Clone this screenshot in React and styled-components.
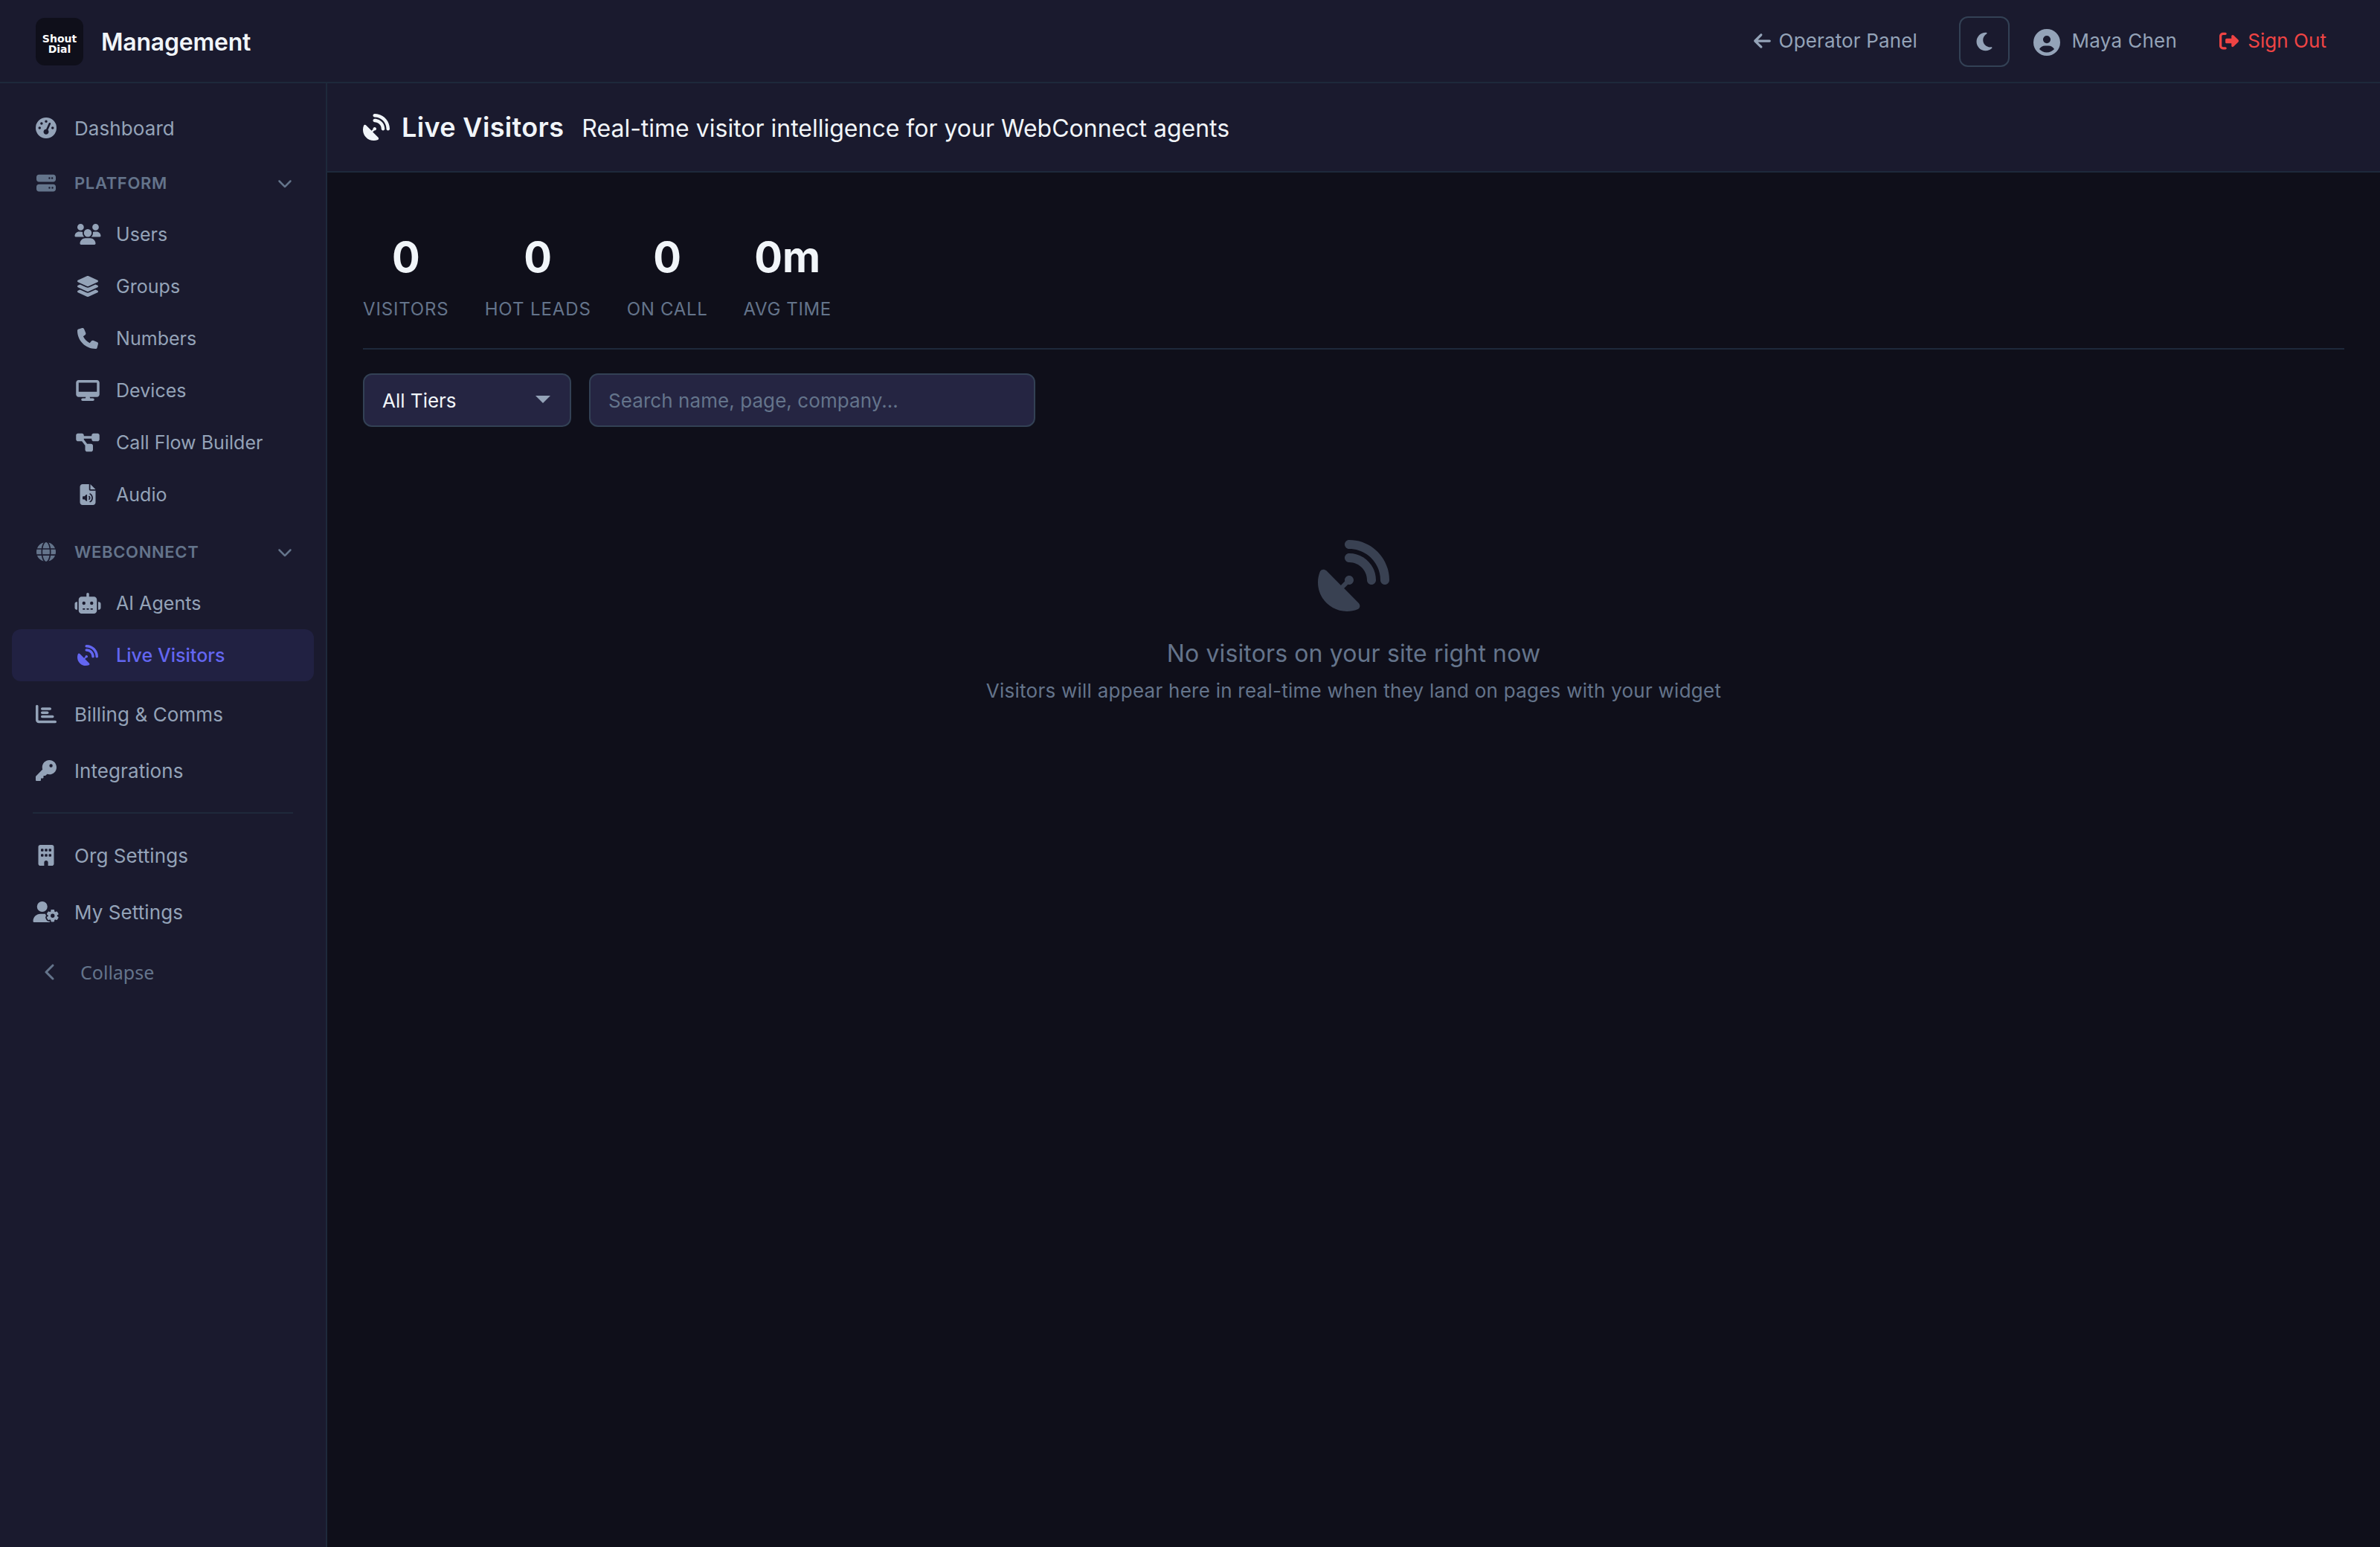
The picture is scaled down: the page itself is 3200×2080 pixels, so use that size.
import React, { useState } from "react";
import styled, { createGlobalStyle } from "styled-components";
import {
  FaArrowLeft,
  FaBuilding,
  FaChartBar,
  FaChevronDown,
  FaChevronLeft,
  FaCircleUser,
  FaDesktop,
  FaDiagramProject,
  FaFileAudio,
  FaGaugeHigh,
  FaGlobe,
  FaKey,
  FaLayerGroup,
  FaMoon,
  FaPhone,
  FaRightFromBracket,
  FaRobot,
  FaSatelliteDish,
  FaServer,
  FaUserGear,
  FaUsers,
} from "react-icons/fa6";

const GlobalStyle = createGlobalStyle`
  * {
    box-sizing: border-box;
  }

  body {
    margin: 0;
    background: #0f0f1a;
    color: #f1f5f9;
    font-family: Inter, "Liberation Sans", sans-serif;
    font-size: 28px;
  }

  svg {
    flex: none;
  }
`;

const Page = styled.div`
  display: flex;
  flex-direction: column;
  height: 2080px;
`;

const TopBar = styled.header`
  display: flex;
  align-items: center;
  justify-content: space-between;
  height: 112px;
  padding: 2px 48px 0;
  background: #1a1a2e;
  border-bottom: 2px solid #1e293b;
`;

const Brand = styled.div`
  display: flex;
  align-items: center;
  gap: 24px;
  font-size: 32px;
  font-weight: 600;
  letter-spacing: -0.22px;
`;

const Logo = styled.div`
  display: flex;
  flex-direction: column;
  justify-content: center;
  width: 64px;
  height: 64px;
  padding-top: 6px;
  border-radius: 12px;
  background: #0f0f1a;
  color: #fff;
  font: bold 14px/14px "DejaVu Sans", sans-serif;
  letter-spacing: 0;
  text-align: center;
`;

const TopActions = styled.div`
  display: flex;
  align-items: center;
  font-size: 26px;
  color: #94a3b8;
`;

const TopLink = styled.a`
  display: flex;
  align-items: center;
  gap: ${(props) => (props.$danger ? "12px" : "10.5px")};
  margin-bottom: 3px;
  padding: 0 24px;
  color: ${(props) => (props.$danger ? "#ef4444" : "#94a3b8")};
  letter-spacing: ${(props) => (props.$danger ? "0.05px" : "0.15px")};

  svg {
    width: ${(props) => (props.$danger ? "26px" : "23px")};
  }
`;

const ThemeButton = styled.button`
  display: flex;
  align-items: center;
  justify-content: center;
  width: 68px;
  height: 68px;
  margin: 0 32px 0 31.5px;
  padding: 0;
  border: 2px solid #334155;
  border-radius: 12px;
  background: transparent;
  color: #94a3b8;
  font-size: 28px;
`;

const UserInfo = styled.div`
  display: flex;
  align-items: center;
  gap: 16px;
  margin-right: 33px;
  letter-spacing: 0.3px;

  svg {
    margin-top: 2px;
    font-size: 36px;
  }

  span {
    margin-bottom: 3px;
  }
`;

const Body = styled.div`
  display: flex;
  flex: 1;
`;

const Sidebar = styled.nav`
  width: 440px;
  padding: 24px 16px;
  background: #1a1a2e;
  border-right: 2px solid #1e293b;
`;

const NavIcon = styled.span`
  display: flex;
  justify-content: center;
  width: 36px;
  font-size: 28px;

  svg {
    width: 36px;
  }
`;

const NavLabel = styled.span`
  padding-bottom: 1px;
`;

const NavItem = styled.a`
  display: flex;
  align-items: center;
  gap: 20px;
  height: 74px;
  margin-bottom: 2px;
  padding-left: 28px;
  border-radius: 12px;
  color: #94a3b8;
  font-size: 26px;
  letter-spacing: 0.08px;

  > ${NavIcon} {
    margin-bottom: 2px;
  }
`;

const SubItem = styled(NavItem)`
  height: 70px;
  margin-bottom: 0;
  padding-left: 84px;
  background: ${(props) => (props.$active ? "rgba(99, 102, 241, 0.1)" : "none")};
  color: ${(props) => (props.$active ? "#6366f1" : "#94a3b8")};
  font-size: 25px;
  font-weight: ${(props) => (props.$active ? 500 : 400)};
  letter-spacing: 0.04px;

  > ${NavIcon} {
    margin-bottom: 0;
  }
`;

const GroupHead = styled.div`
  display: flex;
  align-items: center;
  gap: 20px;
  height: 68px;
  padding: 0 29px 0 28px;
  color: #64748b;
  font-size: 22px;
  font-weight: 600;
  letter-spacing: 0.65px;
  text-transform: uppercase;

  ${NavIcon} {
    font-size: 26px;
  }

  > svg {
    margin-left: auto;
    font-size: 20px;
  }
`;

const GroupList = styled.div`
  margin-bottom: 8px;
`;

const Divider = styled.hr`
  height: 2px;
  margin: 18px 28px 20px;
  border: 0;
  background: #1e293b;
`;

const CollapseButton = styled.button`
  display: flex;
  align-items: center;
  gap: 28.5px;
  height: 76px;
  margin-top: 5px;
  padding: 0 0 0 39.5px;
  border: 0;
  background: none;
  color: #64748b;
  font: 25px "Noto Sans", sans-serif;

  svg {
    font-size: 24px;
  }
`;

const Content = styled.main`
  flex: 1;
`;

const PageHead = styled.div`
  display: flex;
  align-items: center;
  height: 120px;
  padding: 0 48px;
  background: #1a1a2e;
  border-bottom: 2px solid #1e293b;
`;

const Title = styled.h1`
  display: flex;
  align-items: center;
  gap: 16px;
  margin: 0;
  font-size: 36px;
  font-weight: 600;
  letter-spacing: 0.35px;
`;

const Subtitle = styled.span`
  margin: 2px 0 0 24px;
  font-size: 32px;
`;

const Section = styled.section`
  padding: 64px 48px 0;
`;

const Stats = styled.div`
  display: flex;
  gap: 48px;
  height: 174px;
  padding-top: 16px;
  border-bottom: 2px solid #1e293b;
`;

const Stat = styled.div`
  text-align: center;
`;

const StatValue = styled.div`
  font-size: 56px;
  font-weight: 700;
  line-height: 68px;
`;

const StatLabel = styled.div`
  margin-top: 20px;
  color: #64748b;
  font-size: 24px;
  line-height: 32px;
  letter-spacing: ${(props) => props.$spacing}px;
  text-transform: uppercase;
`;

const Filters = styled.div`
  display: flex;
  gap: 24px;
  margin-top: 32px;
`;

const TierSelect = styled.button`
  display: flex;
  align-items: center;
  justify-content: space-between;
  width: 280px;
  height: 72px;
  padding: 0 26px 0 24px;
  border: 2px solid #334155;
  border-radius: 12px;
  background: #252542;
  color: #f1f5f9;
  font: 26px Inter, sans-serif;

  svg {
    margin-bottom: 2px;
  }
`;

const SearchInput = styled.input`
  width: 600px;
  height: 72px;
  padding: 0 24px;
  border: 2px solid #334155;
  border-radius: 12px;
  background: #252542;
  color: #f1f5f9;
  font: 26px Inter, sans-serif;
  letter-spacing: 0.07px;

  &::placeholder {
    color: #64748b;
  }
`;

const Empty = styled.div`
  display: flex;
  flex-direction: column;
  align-items: center;
  padding-top: 152px;
  color: #64748b;

  svg {
    font-size: 96px;
    opacity: 0.5;
  }
`;

const EmptyTitle = styled.div`
  margin-top: 33px;
  font-size: 32px;
  line-height: 48px;
  letter-spacing: 0.13px;
`;

const EmptyText = styled.div`
  margin-top: 6px;
  font-size: 26px;
  line-height: 40px;
  letter-spacing: 0.25px;
`;

const platformItems = [
  { label: "Users", icon: FaUsers },
  { label: "Groups", icon: FaLayerGroup },
  { label: "Numbers", icon: FaPhone },
  { label: "Devices", icon: FaDesktop },
  { label: "Call Flow Builder", icon: FaDiagramProject },
  { label: "Audio", icon: FaFileAudio },
];

const webItems = [
  { label: "AI Agents", icon: FaRobot },
  { label: "Live Visitors", icon: FaSatelliteDish },
];

const stats = [
  { label: "Visitors", value: "0", spacing: 0.85 },
  { label: "Hot Leads", value: "0", spacing: 0.9 },
  { label: "On Call", value: "0", spacing: 0.7 },
  { label: "Avg Time", value: "0m", spacing: 0.6 },
];

function NavLink({ icon: Icon, label, sub, active }) {
  const Item = sub ? SubItem : NavItem;

  return (
    <Item $active={active}>
      <NavIcon>
        <Icon />
      </NavIcon>
      <NavLabel>{label}</NavLabel>
    </Item>
  );
}

function NavGroup({ icon: Icon, label, items, active }) {
  return (
    <GroupList>
      <GroupHead>
        <NavIcon>
          <Icon />
        </NavIcon>
        <span>{label}</span>
        <FaChevronDown />
      </GroupHead>
      {items.map((item) => (
        <NavLink key={item.label} sub active={item.label === active} {...item} />
      ))}
    </GroupList>
  );
}

export default function App() {
  const [search, setSearch] = useState("");

  return (
    <Page>
      <GlobalStyle />
      <TopBar>
        <Brand>
          <Logo>
            <span>Shout</span>
            <span>Dial</span>
          </Logo>
          <span>Management</span>
        </Brand>
        <TopActions>
          <TopLink>
            <FaArrowLeft />
            <span>Operator Panel</span>
          </TopLink>
          <ThemeButton>
            <FaMoon />
          </ThemeButton>
          <UserInfo>
            <FaCircleUser />
            <span>Maya Chen</span>
          </UserInfo>
          <TopLink $danger>
            <FaRightFromBracket />
            <span>Sign Out</span>
          </TopLink>
        </TopActions>
      </TopBar>
      <Body>
        <Sidebar>
          <NavLink icon={FaGaugeHigh} label="Dashboard" />
          <NavGroup icon={FaServer} label="Platform" items={platformItems} />
          <NavGroup
            icon={FaGlobe}
            label="WebConnect"
            items={webItems}
            active="Live Visitors"
          />
          <NavLink icon={FaChartBar} label="Billing & Comms" />
          <NavLink icon={FaKey} label="Integrations" />
          <Divider />
          <NavLink icon={FaBuilding} label="Org Settings" />
          <NavLink icon={FaUserGear} label="My Settings" />
          <CollapseButton>
            <FaChevronLeft />
            <span>Collapse</span>
          </CollapseButton>
        </Sidebar>
        <Content>
          <PageHead>
            <Title>
              <FaSatelliteDish />
              <span>Live Visitors</span>
            </Title>
            <Subtitle>Real-time visitor intelligence for your WebConnect agents</Subtitle>
          </PageHead>
          <Section>
            <Stats>
              {stats.map((stat) => (
                <Stat key={stat.label}>
                  <StatValue>{stat.value}</StatValue>
                  <StatLabel $spacing={stat.spacing}>{stat.label}</StatLabel>
                </Stat>
              ))}
            </Stats>
            <Filters>
              <TierSelect>
                <span>All Tiers</span>
                <svg width="20" height="10" viewBox="0 0 20 10">
                  <path d="M0 0h20L10 10z" fill="#94a3b8" />
                </svg>
              </TierSelect>
              <SearchInput
                value={search}
                onChange={(e) => setSearch(e.target.value)}
                placeholder="Search name, page, company..."
              />
            </Filters>
            <Empty>
              <FaSatelliteDish />
              <EmptyTitle>No visitors on your site right now</EmptyTitle>
              <EmptyText>
                Visitors will appear here in real-time when they land on pages with your widget
              </EmptyText>
            </Empty>
          </Section>
        </Content>
      </Body>
    </Page>
  );
}
